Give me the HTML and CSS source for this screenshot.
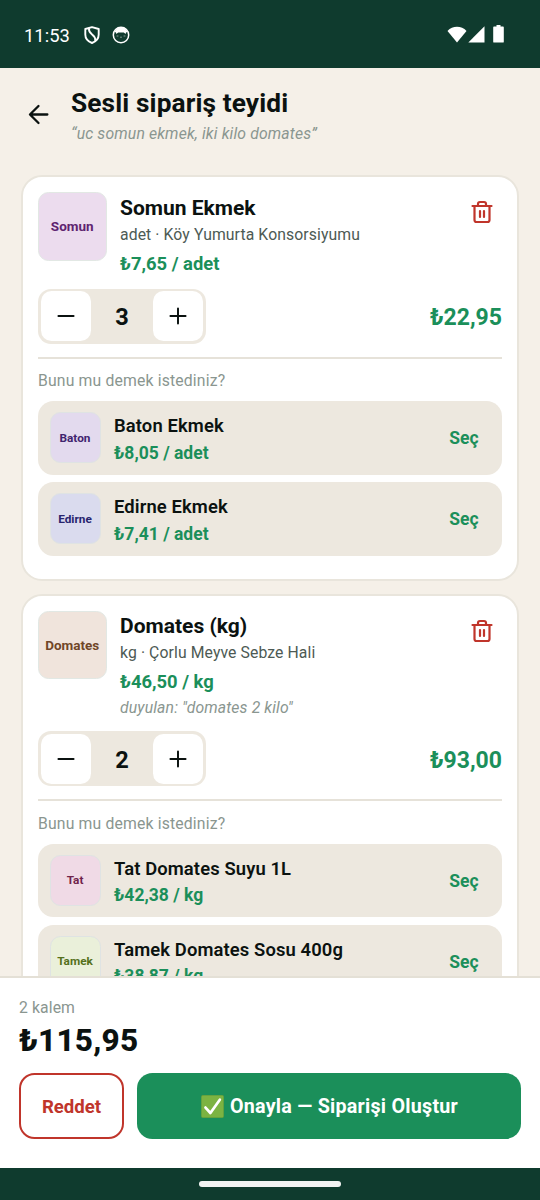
FILE: index.html
```html
<!DOCTYPE html>
<html lang="tr">
<head>
<meta charset="utf-8">
<title>Sesli sipariş teyidi</title>
<link rel="stylesheet" href="styles.css">
</head>
<body>
<svg class="defs" aria-hidden="true">
  <symbol id="trash" viewBox="0 0 24 24"><path d="M2.500 6h19M19.500 6v14a2 2 0 0 1-2 2h-11a2 2 0 0 1-2-2V6m3.500 0V4a2 2 0 0 1 2-2h4a2 2 0 0 1 2 2v2M10 11v6M14 11v6"/></symbol>
  <symbol id="minus" viewBox="0 0 24 24"><path d="M5 12h14"/></symbol>
  <symbol id="plus" viewBox="0 0 24 24"><path d="M5 12h14M12 5v14"/></symbol>
</svg>
<div class="phone">
  <div class="status">
    <span class="clock">11:53</span>
    <svg class="shield" viewBox="0 0 16 18"><path d="M8 1.100 14.700 3v5.500c0 4.100-2.700 7-6.700 8.500C4 15.500 1.300 12.600 1.300 8.500V3z"/><path d="M5 2.500C4 9 12 8 11.300 14.500"/></svg>
    <svg class="cat" viewBox="0 0 18 18"><circle cx="9" cy="9" r="7.700"/><path class="fill" d="M2.500 6C4 2.500 6.500 1.200 9 1.200S14 2.500 15.500 6L14 6.500 13.700 8 11.800 6.600H6.200L4.300 8 4 6.500z"/><path class="dots" d="M5 10h1M12 10h1M8.500 11.200h1"/></svg>
    <svg class="wifi" viewBox="0 0 20 17"><path d="M.5 5C5.500-.6 14.500-.6 19.500 5L10 16.500z"/></svg>
    <svg class="signal" viewBox="0 0 17 17"><path d="M16.500.3v16.200H.3z"/></svg>
    <svg class="battery" viewBox="0 0 11 18"><path d="M3.500 0h4v1.600H10q.8 0 .8.900v14.200q0 .9-.8.900H1q-.8 0-.8-.9V2.500q0-.9.800-.9h2.500z"/></svg>
  </div>
  <header class="header">
    <svg class="back" viewBox="0 0 24 24"><path d="M20.500 12H4M12 3.800 3.800 12l8.200 8.200"/></svg>
    <div>
      <h1 class="title">Sesli sipariş teyidi</h1>
      <p class="quote">“uc somun ekmek, iki kilo domates”</p>
    </div>
  </header>
  <main class="list">
    <section class="card">
      <div class="item">
        <div class="thumb purple">Somun</div>
        <div class="info">
          <h2 class="name">Somun Ekmek</h2>
          <p class="vendor">adet · Köy Yumurta Konsorsiyumu</p>
          <p class="price">₺7,65 / adet</p>
        </div>
        <svg class="trash"><use href="#trash"/></svg>
      </div>
      <div class="amount">
        <div class="stepper"><button class="step"><svg><use href="#minus"/></svg></button><span class="qty">3</span><button class="step"><svg><use href="#plus"/></svg></button></div>
        <span class="sum">₺22,95</span>
      </div>
      <p class="ask">Bunu mu demek istediniz?</p>
      <div class="options">
        <div class="option"><div class="mini violet">Baton</div><div class="opt-info"><p class="opt-name">Baton Ekmek</p><p class="opt-price">₺8,05 / adet</p></div><span class="pick">Seç</span></div>
        <div class="option"><div class="mini blue">Edirne</div><div class="opt-info"><p class="opt-name">Edirne Ekmek</p><p class="opt-price">₺7,41 / adet</p></div><span class="pick">Seç</span></div>
      </div>
    </section>
    <section class="card">
      <div class="item heard-item">
        <div class="thumb peach">Domates</div>
        <div class="info">
          <h2 class="name">Domates (kg)</h2>
          <p class="vendor">kg · Çorlu Meyve Sebze Hali</p>
          <p class="price">₺46,50 / kg</p>
          <p class="heard">duyulan: "domates 2 kilo"</p>
        </div>
        <svg class="trash"><use href="#trash"/></svg>
      </div>
      <div class="amount">
        <div class="stepper"><button class="step"><svg><use href="#minus"/></svg></button><span class="qty">2</span><button class="step"><svg><use href="#plus"/></svg></button></div>
        <span class="sum">₺93,00</span>
      </div>
      <p class="ask">Bunu mu demek istediniz?</p>
      <div class="options">
        <div class="option"><div class="mini pink">Tat</div><div class="opt-info"><p class="opt-name">Tat Domates Suyu 1L</p><p class="opt-price">₺42,38 / kg</p></div><span class="pick">Seç</span></div>
        <div class="option"><div class="mini lime">Tamek</div><div class="opt-info"><p class="opt-name">Tamek Domates Sosu 400g</p><p class="opt-price">₺38,87 / kg</p></div><span class="pick">Seç</span></div>
      </div>
    </section>
  </main>
  <footer class="footer">
    <p class="count">2 kalem</p>
    <p class="total">₺115,95</p>
    <div class="actions">
      <button class="reject">Reddet</button>
      <button class="confirm"><svg class="check" viewBox="0 0 22 22"><rect x=".3" y=".3" width="21.400" height="21.400" rx="1.500"/><path d="M4.300 12 9 17.200 18 4.500"/></svg><span>Onayla — Siparişi Oluştur</span></button>
    </div>
  </footer>
  <div class="navbar"><span class="pill"></span></div>
</div>
</body>
</html>
```
FILE: styles.css
```css
* { box-sizing: border-box; margin: 0; padding: 0; }
body { background: #f5f0e8; font-family: Roboto, "Noto Sans", sans-serif; color: #0b1210; }
button { font: inherit; border: 0; background: none; }
svg { flex: none; fill: none; stroke: currentColor; stroke-linecap: round; stroke-linejoin: round; }
.defs { display: none; }
.phone { width: 540px; height: 1200px; display: flex; flex-direction: column; overflow: hidden; }
.status { height: 68px; flex: none; background: #0f3b2e; color: #fff; display: flex; align-items: center; padding: 2px 36px 0 24px; }
.clock { font-size: 18.4px; width: 60px; line-height: 22px; padding-top: 1px; }
.shield { width: 16px; height: 18px; stroke-width: 1.9; }
.cat { width: 18px; height: 18px; margin-left: 12px; stroke-width: 1.5; }
.cat .fill { fill: #fff; stroke: none; }
.cat .dots { stroke-width: .5; }
.wifi, .signal, .battery { fill: #fff; stroke: none; margin-top: -2px; }
.wifi { width: 20px; height: 17px; margin-left: auto; }
.signal { width: 17px; height: 17px; margin-left: 1px; }
.battery { width: 11px; height: 18px; margin: -2px 0 0 8px; }
.header { flex: none; height: 107px; padding: 19px 26px 0; display: flex; gap: 20px; }
.back { width: 25px; height: 25px; margin-top: 15px; stroke-width: 2.200; }
.title { font-size: 26.25px; line-height: 32px; font-weight: 700; letter-spacing: .12px; }
.quote { font-size: 15.75px; line-height: 20px; margin-top: 4.5px; font-style: italic; color: #8a9690; letter-spacing: .15px; }
.list { flex: 1; min-height: 0; overflow: hidden; padding: 0 21px; display: flex; flex-direction: column; gap: 12.500px; }
.card { flex: none; background: #fff; border: 2px solid #e9e5dc; border-radius: 21px; padding: 15px 15px 23.500px; }
.item { display: flex; height: 97px; }
.heard-item { height: 121px; }
.thumb { width: 68.500px; height: 68.500px; border: 1.300px solid #e2e8e4; border-radius: 10.500px; display: grid; place-items: center; font-size: 13.500px; font-weight: 700; margin-right: 13.500px; flex: none; }
.purple { background: #ecdcee; color: #5f2470; }
.peach { background: #f0e4dc; color: #704628; }
.info { flex: 1; }
.name { font-size: 21px; line-height: 26px; font-weight: 700; margin-top: 2.500px; }
.vendor { font-size: 15.75px; line-height: 20px; margin-top: 4px; color: #4d5a54; letter-spacing: .1px; }
.price { font-size: 18.4px; line-height: 24px; font-weight: 700; margin-top: 7px; color: #1b8f5a; }
.heard { font-size: 15.75px; line-height: 20px; margin-top: 4px; font-style: italic; color: #8a9690; letter-spacing: .14px; }
.trash { width: 24px; height: 24px; color: #c0352b; stroke-width: 2.2; margin: 8px 8px 0 0; }
.amount { display: flex; justify-content: space-between; align-items: center; height: 69.500px; padding-bottom: 13px; border-bottom: 2px solid #e6e2d9; }
.stepper { width: 168px; height: 55px; background: #ede8df; border-radius: 13px; padding: 2.500px; display: flex; justify-content: space-between; align-items: center; }
.step { width: 50.500px; height: 50px; border-radius: 10.500px; background: #fff; display: grid; place-items: center; color: #0b1210; }
.step svg { width: 26px; height: 26px; stroke-width: 1.8; }
.qty { font-size: 23.6px; font-weight: 700; line-height: 30px; padding-top: 2px; }
.sum { font-size: 23px; font-weight: 700; line-height: 30px; padding-top: 4px; color: #1b8f5a; }
.ask { font-size: 15.75px; line-height: 20px; color: #8a9690; margin-top: 12.500px; letter-spacing: .16px; }
.options { display: flex; flex-direction: column; gap: 7.500px; margin-top: 10px; }
.option { height: 73.500px; display: flex; align-items: center; background: #ede8df; border-radius: 15.500px; padding: 0 23.500px 0 11.500px; }
.mini { width: 51px; height: 51px; border: 1.300px solid #dfe3e3; border-radius: 10.500px; display: grid; place-items: center; font-size: 11.800px; font-weight: 700; margin-right: 13.500px; flex: none; }
.violet { background: #e3daee; color: #40246e; }
.blue { background: #dadbee; color: #28246e; }
.pink { background: #f0dae6; color: #70244c; }
.lime { background: #eaf0da; color: #55701c; }
.opt-info { flex: 1; padding-top: 2px; }
.opt-name { font-size: 18.4px; line-height: 24px; font-weight: 600; letter-spacing: .12px; }
.opt-price { font-size: 17.5px; line-height: 22px; font-weight: 700; margin-top: 3.500px; color: #1b8f5a; }
.pick { font-size: 17.500px; font-weight: 700; color: #1b8f5a; padding-top: 1px; }
.footer { flex: none; height: 192px; background: #fff; border-top: 2px solid #e4e0d6; padding: 20px 19px 0; }
.count { font-size: 15.75px; line-height: 20px; color: #8a9690; letter-spacing: .1px; }
.total { font-size: 31.5px; line-height: 38px; font-weight: 800; margin-top: 4px; letter-spacing: .2px; }
.actions { display: flex; gap: 13px; margin-top: 12.500px; }
.reject { width: 105px; height: 66px; border: 2px solid #c0352b; border-radius: 15.500px; color: #c0352b; font-size: 18.6px; font-weight: 700; padding-top: 2px; }
.confirm { flex: 1; height: 66px; border-radius: 15.500px; background: #1b8f5a; color: #fff; font-size: 19.7px; font-weight: 700; letter-spacing: .25px; display: flex; align-items: center; justify-content: center; gap: 6px; padding: 2px 0 0 1px; }
.check { width: 23px; height: 23px; stroke: #fff; stroke-width: 2.600; }
.check rect { fill: #7cb342; stroke: #689f38; stroke-width: .6; }
.navbar { height: 32px; flex: none; background: #0f3b2e; display: grid; place-items: center; }
.pill { width: 142px; height: 6px; border-radius: 3px; background: #f1f3f2; }
```
